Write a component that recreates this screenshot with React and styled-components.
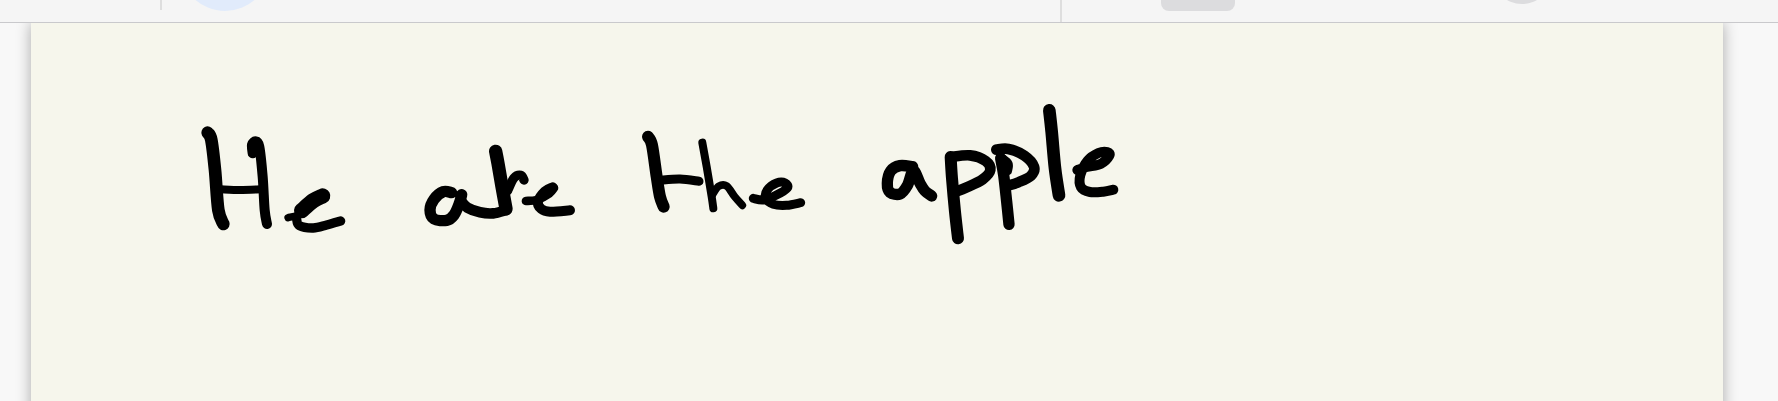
import styled, { createGlobalStyle } from 'styled-components'

const GlobalStyle = createGlobalStyle`
  html, body {
    margin: 0;
    padding: 0;
    height: 100%;
    overflow: hidden;
    background: #f8f8f8;
  }
`

const Page = styled.div`
  display: flex;
  flex-direction: column;
  height: 401px;
  overflow: hidden;
`

const Toolbar = styled.div`
  position: relative;
  z-index: 2;
  display: flex;
  flex: none;
  align-items: flex-start;
  height: 22px;
  background: #f5f5f5;
  border-bottom: 1px solid #c9c9cc;
  overflow: hidden;
`

const Divider = styled.div`
  flex: none;
  width: 2px;
  height: ${(p) => p.h}px;
  margin-left: ${(p) => p.left}px;
  background: #dedede;
`

const Avatar = styled.div`
  flex: none;
  width: ${(p) => p.size}px;
  height: ${(p) => p.size}px;
  margin-left: ${(p) => p.left}px;
  margin-top: ${(p) => p.bottom - p.size}px;
  border-radius: 50%;
  background: ${(p) => p.color};
`

const ToolButton = styled.div`
  flex: none;
  width: 74px;
  height: 11px;
  margin-left: 99px;
  border-radius: 0 0 8px 8px;
  background: #dcdcde;
`

const Desk = styled.div`
  flex: 1;
  padding: 0 55px 0 31px;
  background: #f8f8f8;
`

const Sheet = styled.div`
  height: 100%;
  padding: 72px 0 0 159px;
  background: #f6f6ec;
  box-shadow: 0 0 14px rgba(0, 0, 0, 0.32);
`

const Ink = styled.svg`
  display: block;
  width: 960px;
  height: 160px;
  fill: none;
  stroke: #000;
  stroke-linecap: round;
  stroke-linejoin: round;
`

// strokes are [width, x, y, x, y, ...], traced at 3x from the word's corner
const WORDS = [
  {
    x: 190,
    y: 110,
    strokes: [
      [38, 53, 68, 64, 90, 75, 180, 85, 300, 100, 342],
      [30, 188, 130, 186, 104, 197, 94, 208, 110, 218, 200, 224, 300, 231, 342],
      [24, 92, 238, 150, 240, 212, 238],
      [46, 335, 302, 370, 272, 398, 258],
      [22, 294, 323, 330, 312, 370, 275],
      [28, 320, 328, 328, 347, 370, 354, 410, 345, 452, 333],
    ],
  },
  {
    x: 410,
    y: 120,
    strokes: [
      [34, 125, 218, 100, 215, 72, 238, 60, 270, 72, 297, 110, 301, 132, 285, 148, 250, 155, 224],
      [32, 152, 242, 172, 263, 210, 277, 250, 280, 290, 270],
      [40, 257, 94, 264, 130, 276, 200, 288, 266],
      [28, 293, 212, 312, 174, 333, 166, 342, 180],
      [26, 348, 243, 380, 240, 418, 220, 432, 204],
      [30, 428, 202, 405, 214, 384, 245, 394, 267, 420, 275, 480, 271],
    ],
  },
  {
    x: 630,
    y: 120,
    strokes: [
      [36, 54, 50, 66, 75, 80, 170, 90, 230, 101, 260],
      [27, 88, 181, 150, 177, 207, 184],
      [24, 217, 68, 230, 140, 245, 230, 250, 265],
      [23, 248, 223, 266, 199, 290, 198, 314, 230, 337, 256],
      [27, 370, 235, 400, 240, 438, 226, 472, 204, 466, 189, 440, 189, 412, 210, 407, 235, 430, 253, 470, 256, 512, 248],
    ],
  },
  {
    x: 870,
    y: 95,
    strokes: [
      [34, 128, 215, 90, 212, 62, 228, 52, 265, 60, 292, 90, 297, 113, 270, 130, 226, 150, 265, 165, 288, 185, 303],
      [36, 242, 186, 246, 250, 255, 350, 264, 430],
      [32, 242, 186, 300, 181, 347, 198, 361, 225, 338, 253, 290, 277, 252, 292],
    ],
  },
  {
    x: 985,
    y: 135,
    strokes: [
      [34, 47, 70, 56, 120, 65, 200, 72, 268],
      [26, 50, 68, 70, 86, 68, 108],
      [32, 34, 44, 70, 42, 118, 62, 147, 95, 138, 122, 100, 142, 68, 152],
    ],
  },
  {
    x: 1020,
    y: 95,
    strokes: [
      [38, 88, 46, 95, 110, 105, 220, 117, 301],
      [30, 172, 225, 200, 216, 243, 206, 268, 182, 262, 171, 235, 174, 203, 197, 181, 240, 183, 277, 210, 291, 250, 290, 280, 284],
    ],
  },
]

const smooth = (nums) => {
  const pts = []
  for (let i = 0; i < nums.length; i += 2) pts.push([nums[i], nums[i + 1]])
  let d = `M${pts[0][0]} ${pts[0][1]}`
  for (let i = 0; i < pts.length - 1; i++) {
    const a = pts[i - 1] || pts[i]
    const b = pts[i]
    const c = pts[i + 1]
    const e = pts[i + 2] || c
    const c1 = [b[0] + (c[0] - a[0]) / 6, b[1] + (c[1] - a[1]) / 6]
    const c2 = [c[0] - (e[0] - b[0]) / 6, c[1] - (e[1] - b[1]) / 6]
    d += `C${c1[0]} ${c1[1]} ${c2[0]} ${c2[1]} ${c[0]} ${c[1]}`
  }
  return d
}

const Handwriting = () => {
  return (
    <Ink viewBox="190 95 960 160" role="img" aria-label="He ate the apple">
      {WORDS.map((word, idx) => (
        <g key={idx} transform={`translate(${word.x} ${word.y}) scale(0.3333)`}>
          {word.strokes.map(([width, ...nums], i) => (
            <path key={i} d={smooth(nums)} strokeWidth={width} />
          ))}
        </g>
      ))}
    </Ink>
  )
}

const App = () => {
  return (
    <Page>
      <GlobalStyle />
      <Toolbar>
        <Divider h={10} left={160} />
        <Avatar size={90} bottom={11} left={18} color="#e1ebfb" />
        <Divider h={22} left={790} />
        <ToolButton />
        <Avatar size={60} bottom={4} left={257} color="#dcdcde" />
      </Toolbar>
      <Desk>
        <Sheet>
          <Handwriting />
        </Sheet>
      </Desk>
    </Page>
  )
}

export default App
